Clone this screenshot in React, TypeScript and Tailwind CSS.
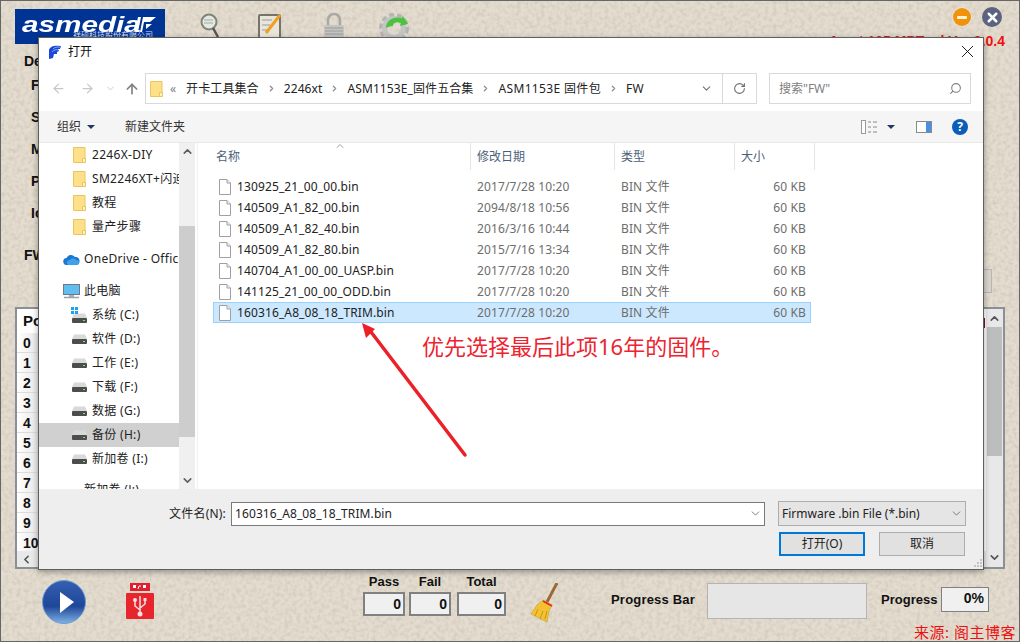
import { ArrowLeft, ArrowRight, ArrowUp, ChevronDown, ChevronLeft, ChevronRight, ChevronUp, RotateCw, Search, X } from "lucide-react";

const sans = "[font-family:'Noto_Sans','Noto_Sans_CJK_SC',sans-serif]";

const files = [
  { name: "130925_21_00_00.bin", date: "2017/7/28 10:20" },
  { name: "140509_A1_82_00.bin", date: "2094/8/18 10:56" },
  { name: "140509_A1_82_40.bin", date: "2016/3/16 10:44" },
  { name: "140509_A1_82_80.bin", date: "2015/7/16 13:34" },
  { name: "140704_A1_00_00_UASP.bin", date: "2017/7/28 10:20" },
  { name: "141125_21_00_00_ODD.bin", date: "2017/7/28 10:20" },
  { name: "160316_A8_08_18_TRIM.bin", date: "2017/7/28 10:20", selected: true },
];

const folders = ["2246X-DIY", "SM2246XT+闪迪", "教程", "量产步骤"];
const drives = ["软件 (D:)", "工作 (E:)", "下载 (F:)", "数据 (G:)", "备份 (H:)", "新加卷 (I:)"];
const crumbs = ["开卡工具集合", "2246xt", "ASM1153E_固件五合集", "ASM1153E 固件包", "FW"];

function FolderIcon({ className = "" }: { className?: string }) {
  return (
    <svg width="13" height="16" viewBox="0 0 13 16" className={`shrink-0 ${className}`}>
      <path d="M.5.5h11.500v15H.5z" fill="#ffe08a" stroke="#e9c65c" />
      <path d="M9.500 11.500h3v4h-3z" fill="#fff1c4" stroke="#e9c65c" />
    </svg>
  );
}

function DriveIcon() {
  return (
    <svg width="15" height="10" viewBox="0 0 15 10" className="shrink-0">
      <path d="M2 0.500h11l2 4.500H0z" fill="#d9d9d9" />
      <rect x="0" y="5" width="15" height="5" rx="1" fill="#4a4f4a" />
      <rect x="11" y="7" width="2" height="1" fill="#7fe07f" />
    </svg>
  );
}

function FileIcon() {
  return (
    <svg width="12" height="16" viewBox="0 0 12 16" className="shrink-0">
      <path d="M.5.5h7.500l3.500 3.500v11.500h-11z" fill="#fff" stroke="#a0a0a0" />
      <path d="M8 .5v3.500h3.500" fill="#f0f0f0" stroke="#a0a0a0" />
    </svg>
  );
}

function Toolbar() {
  return (
    <div className="flex items-start">
      <svg width="20" height="26" viewBox="0 0 20 26" className="ml-[35px] mt-[4px]">
        <circle cx="9" cy="9" r="7.500" fill="#e4e8e2" stroke="#7d8478" strokeWidth="2" />
        <path d="M4 7h9M4 10h9" stroke="#a5a9a0" />
        <path d="M13 15l5 9" stroke="#555" strokeWidth="2.500" />
      </svg>
      <svg width="26" height="26" viewBox="0 0 26 26" className="ml-[38px] mt-[4px]">
        <rect x="1" y="2" width="21" height="23" rx="1" fill="#e8e5dc" stroke="#77736a" strokeWidth="2" />
        <path d="M4 7h10M4 12h8M4 17h6" stroke="#999" />
        <path d="M8 20L22 2" stroke="#f0a020" strokeWidth="3" />
      </svg>
      <svg width="24" height="26" viewBox="0 0 24 26" className="ml-[38px] mt-[4px]">
        <path d="M6 12V7a6 6 0 0 1 12 0v5" fill="none" stroke="#a8a8a6" strokeWidth="2.500" />
        <rect x="2" y="12" width="20" height="14" rx="2" fill="#c4c4c2" />
        <path d="M3 15h18M3 18h18M3 21h18" stroke="#9b9b99" />
      </svg>
      <svg width="30" height="30" viewBox="0 0 30 30" className="ml-[33px] mt-[4px]">
        <circle cx="15" cy="15" r="13" fill="none" stroke="#b4b4b4" strokeWidth="4" strokeDasharray="5 3" />
        <circle cx="15" cy="15" r="9.500" fill="none" stroke="#c4c4c4" strokeWidth="5" />
        <path d="M7 15C7 7 15 3 23 5l1-2 5 8-8 2 1-3C17 8 14 10 14 13c-3 0-5 1-7 2z" fill="#4cc23e" />
      </svg>
    </div>
  );
}

function Logo() {
  return (
    <div className="relative h-[35px] w-[150px] overflow-hidden bg-[#003494]">
      <span className="absolute left-[7px] top-[1px] origin-left scale-x-[1.35] text-[22px] font-bold italic leading-[30px] text-white [font-family:'Liberation_Sans',sans-serif]">
        asmedia
      </span>
      <svg width="21" height="15" viewBox="0 0 21 15" className="absolute left-[120px] top-[8px]">
        <path d="M3 0h3L3 15H0zM8 0h13l-6 5H9L7 15H5z" fill="#fff" />
        <path d="M11 7h6l-6 5z" fill="#fff" />
      </svg>
      <span className={`absolute left-[58px] top-[20px] text-[8px] leading-[12px] text-[#d8def0] ${sans}`}>祥硕科技股份有限公司</span>
    </div>
  );
}

function Stat({ label, width }: { label: string; width: string }) {
  return (
    <div className="flex flex-col items-center">
      <span className="text-[13px] font-bold leading-[16px] text-[#111]">{label}</span>
      <span className={`${width} mt-[2px] h-[24px] border-2 border-[#808080] bg-[#f0f0f0] pr-[2px] text-right text-[14px] font-bold leading-[20px] text-[#111]`}>0</span>
    </div>
  );
}

function BackgroundApp() {
  const labels = [
    { text: "Device", cls: "mt-[2px] ml-[23px]" },
    { text: "F", cls: "mt-[8px] ml-[30px]" },
    { text: "S", cls: "mt-[16px] ml-[30px]" },
    { text: "M", cls: "mt-[16px] ml-[30px]" },
    { text: "P", cls: "mt-[16px] ml-[30px]" },
    { text: "Io", cls: "mt-[16px] ml-[30px]" },
    { text: "FW", cls: "mt-[26px] ml-[23px]" },
  ];
  return (
    <div className="flex h-full flex-col [font-family:'Liberation_Sans',sans-serif]">
      <div className="flex h-[50px] items-start pl-[14px] pt-[8px]">
        <Logo />
        <Toolbar />
        <span className="ml-auto mt-[-2px] flex items-center gap-[11px] pr-[17px]">
          <span className="flex h-[18px] w-[18px] items-center justify-center rounded-full bg-[#f0920c] ring-1 ring-[#e8e0d0]">
            <span className="h-[3px] w-[10px] rounded-[1px] bg-[#fff3d0]" />
          </span>
          <span className="flex h-[20px] w-[20px] items-center justify-center rounded-full bg-[#5b6380]">
            <X size={15} strokeWidth={4} className="text-white" />
          </span>
        </span>
      </div>
      <div className="relative h-0">
        <span className="absolute right-[14px] top-[-18px] text-[14px] font-bold leading-[16px] text-[#f01010]">Asmt 105 MPTool Ver 9.0.4</span>
      </div>
      {labels.map((l) => (
        <span key={l.text} className={`${l.cls} text-[14px] font-bold leading-[16px] text-[#111]`}>{l.text}</span>
      ))}
      <div className="mt-[6px] flex h-[24px] justify-end pr-[27px]">
        <span className="w-[60px] border border-[#b5b5b5] bg-[#d8d4cc]" />
      </div>
      <div className="mx-[14px] mt-[14px] flex h-[262px] border-2 border-[#8b8f98] bg-white">
        <div className="flex min-w-0 flex-1 flex-col">
          <div className="flex min-h-0 flex-1 flex-col overflow-hidden">
            <div className="flex h-[24px] shrink-0 items-center justify-between pl-[6px] pr-[1px]">
              <span className="text-[15px] font-bold text-[#111]">Port</span>
              <span className="mt-[3px] h-[10px] w-[3px] bg-[#8a1020]" />
            </div>
            {Array.from({ length: 11 }, (_, i) => (
              <div key={i} className="h-[20px] w-[24px] shrink-0 border-b border-[#dcdcdc] bg-gradient-to-r from-white to-[#e4e4e4] pl-[6px] text-[14px] font-bold leading-[20px] text-[#111]">
                {i}
              </div>
            ))}
          </div>
          <div className="flex h-[16px] shrink-0 items-center bg-[#e9e9e9]">
            <ChevronLeft size={13} strokeWidth={3} className="ml-[3px] text-[#555]" />
          </div>
        </div>
        <div className="flex w-[17px] flex-col items-center bg-[#e8e8e8]">
          <ChevronUp size={13} strokeWidth={3} className="mt-[3px] text-[#555]" />
          <span className="mt-[2px] h-[129px] w-[15px] bg-[#bcbebe]" />
          <ChevronDown size={13} strokeWidth={3} className="mt-auto mb-[3px] text-[#555]" />
        </div>
      </div>
      <div className="relative flex flex-1 items-start">
        <svg width="44" height="44" viewBox="0 0 44 44" className="ml-[41px] mt-[11px]">
          <defs>
            <linearGradient id="playBg" x1="0" y1="0" x2="0" y2="1">
              <stop offset="0" stopColor="#3560b0" />
              <stop offset="0.6" stopColor="#1f4699" />
              <stop offset="1" stopColor="#7fb4e4" />
            </linearGradient>
          </defs>
          <circle cx="22" cy="22" r="21.500" fill="url(#playBg)" stroke="#6a9ad0" />
          <path d="M18 12l14 10-14 11z" fill="#fff" />
        </svg>
        <svg width="28" height="36" viewBox="0 0 28 36" className="ml-[40px] mt-[14px]">
          <path d="M4 0h20v8H4z" fill="#e0202c" />
          <path d="M7 2h3v3H7zM17 2h3v3h-3z" fill="#fff" />
          <path d="M12 6l1-3h2" stroke="#fff" fill="none" />
          <rect y="10" width="28" height="26" rx="1" fill="#e8242c" />
          <path d="M14 13v18M9 17v6l5 4M19 17v4l-5 4" stroke="#f2e0e0" strokeWidth="1.500" fill="none" />
          <circle cx="14" cy="31" r="2.500" fill="#f2e0e0" />
          <rect x="17.500" y="15" width="3" height="3" fill="#f2e0e0" />
          <circle cx="9" cy="17" r="2" fill="#f2e0e0" />
        </svg>
        <div className="ml-[209px] mt-[5px] flex gap-[4px]">
          <Stat label="Pass" width="w-[42px]" />
          <Stat label="Fail" width="w-[42px]" />
          <span className="ml-[2px]">
            <Stat label="Total" width="w-[49px]" />
          </span>
        </div>
        <svg width="28" height="40" viewBox="0 0 28 40" className="ml-[24px] mt-[14px]">
          <path d="M27 0l-10 19" stroke="#9a6a38" strokeWidth="3" />
          <path d="M13 17l9 5-3 6-2 11-16-8 6-9z" fill="#f2c233" stroke="#c89418" strokeWidth="0.500" />
          <path d="M13 18l9 5" stroke="#e03020" strokeWidth="2" />
          <path d="M8 26l-3 7M13 28l-3 8M17 28l-2 8" stroke="#c89418" />
        </svg>
        <span className="ml-[53px] mt-[23px] text-[13px] font-bold leading-[16px] tracking-[0.2px] text-[#111]">Progress Bar</span>
        <span className="ml-[12px] mt-[14px] h-[36px] w-[160px] border border-[#b4b4b4] bg-[#e6e6e6]" />
        <span className="ml-[14px] mt-[23px] w-[56px] whitespace-nowrap text-[13px] font-bold leading-[16px] text-[#111]">Progress</span>
        <span className="ml-[4px] mt-[18px] h-[25px] w-[48px] border border-[#808080] bg-[#f0f0f0] pr-[4px] text-right text-[14px] font-bold leading-[20px] text-[#111]">0%</span>
        <span className={`absolute bottom-0 right-[3px] text-[15px] leading-[18px] tracking-[0.5px] text-[#ee1111] ${sans}`}>来源: 阁主博客</span>
      </div>
    </div>
  );
}

function Sidebar() {
  return (
    <div className="flex w-[156px] shrink-0">
      <div className="w-[140px] shrink-0 overflow-hidden text-[12px] tracking-[0.3px] text-[#222]">
        {folders.map((f) => (
          <div key={f} className="flex h-[24px] items-center whitespace-nowrap pl-[34px]">
            <FolderIcon />
            <span className="ml-[6px]">{f}</span>
          </div>
        ))}
        <div className="mt-[8px] flex h-[24px] items-center whitespace-nowrap pl-[24px]">
          <svg width="17" height="11" viewBox="0 0 17 11" className="shrink-0">
            <path d="M4 11a3.500 3.500 0 0 1-.5-7A5 5 0 0 1 12 3a4 4 0 0 1 1 8z" fill="#1a78d0" />
            <path d="M6 11a2.500 2.500 0 0 1 1-5 3.500 3.500 0 0 1 6 0 2.500 2.500 0 0 1 1 5z" fill="#3ea2ea" />
          </svg>
          <span className="ml-[4px]">OneDrive - Office</span>
        </div>
        <div className="mt-[8px] flex h-[24px] items-center pl-[24px]">
          <svg width="17" height="15" viewBox="0 0 17 15" className="shrink-0">
            <rect x=".5" y=".5" width="16" height="10" fill="#62bdf0" stroke="#6d7a86" />
            <path d="M6 11h5v2H6z" fill="#a8b0b8" />
            <path d="M1 13.500h15" stroke="#9aa2aa" strokeWidth="1.500" />
          </svg>
          <span className="ml-[4px]">此电脑</span>
        </div>
        <div className="flex h-[24px] items-center pl-[33px]">
          <span className="relative flex h-[16px] w-[15px] items-end">
            <DriveIcon />
            <svg width="7" height="7" viewBox="0 0 7 7" className="absolute left-[-1px] top-0">
              <path d="M0 0h3v3H0zM4 0h3v3H4zM0 4h3v3H0zM4 4h3v3H4z" fill="#1ea0f0" />
            </svg>
          </span>
          <span className="ml-[5px]">系统 (C:)</span>
        </div>
        {drives.map((d) => (
          <div key={d} className={`flex h-[24px] items-center pl-[33px] ${d.startsWith("备份") ? "bg-[#d0d0d0]" : ""}`}>
            <DriveIcon />
            <span className="ml-[5px]">{d}</span>
          </div>
        ))}
        <div className="mt-[10px] pl-[45px]">新加卷 (J:)</div>
      </div>
      <div className="flex w-[16px] shrink-0 flex-col items-center bg-[#f0f0f0]">
        <ChevronUp size={13} strokeWidth={3} className="mt-[2px] text-[#606060]" />
        <span className="mt-[68px] h-[211px] w-full bg-[#cdcdcd]" />
        <ChevronDown size={13} strokeWidth={3} className="mt-auto mb-[2px] text-[#606060]" />
      </div>
    </div>
  );
}

function FileList() {
  return (
    <div className="ml-[2px] min-w-0 flex-1 border-l border-[#f0f0f0] pl-[15px]">
      <div className="relative flex h-[27px] text-[12px] text-[#4c607a]">
        <ChevronUp size={12} strokeWidth={1.500} className="absolute left-[121px] top-[-3px] text-[#808080]" />
        <span className="w-[258px] border-r border-[#e5e5e5] pl-[3px] leading-[28px]">名称</span>
        <span className="w-[144px] border-r border-[#e5e5e5] pl-[6px] leading-[28px]">修改日期</span>
        <span className="w-[120px] border-r border-[#e5e5e5] pl-[6px] leading-[28px]">类型</span>
        <span className="w-[80px] border-r border-[#e5e5e5] pl-[6px] leading-[28px]">大小</span>
      </div>
      <div className="mt-[6px] w-[598px] text-[12px] tracking-[0.12px]">
        {files.map((f) => (
          <div key={f.name} className={`flex h-[21px] items-center border pl-[5px] pr-[4px] ${f.selected ? "border-[#99d1ff] bg-[#cce8ff]" : "border-transparent"}`}>
            <FileIcon />
            <span className="ml-[6px] w-[240px] text-[#222]">{f.name}</span>
            <span className="w-[144px] text-[#6d6d6d]">{f.date}</span>
            <span className="w-[120px] text-[#6d6d6d]">BIN 文件</span>
            <span className="w-[65px] text-right text-[#6d6d6d]">60 KB</span>
          </div>
        ))}
      </div>
    </div>
  );
}

function OpenDialog() {
  return (
    <div className={`absolute left-[37px] top-[36px] flex h-[533px] w-[946px] flex-col border border-[#5f5f5f] bg-white shadow-[0_2px_6px_rgba(0,0,0,0.35)] ${sans}`}>
      <div className="flex h-[27px] shrink-0 items-center pl-[9px] pr-[5px] text-[12px] text-[#111]">
        <svg width="14" height="14" viewBox="0 0 14 14">
          <path d="M1 14V5C2 1 7 0 13 1L12 4 10 4 11 6 9 7 9 9 6 9 5 13z" fill="#1c46d8" />
          <path d="M5 4C7 2 9 2 12 2M4 7C6 5 8 4 10 5" stroke="#7fa8f5" fill="none" />
        </svg>
        <span className="ml-[6px]">打开</span>
        <X size={21} strokeWidth={1} className="ml-auto text-black" />
      </div>
      <div className="mt-[8px] flex h-[31px] shrink-0 items-center">
        <ArrowLeft size={15} strokeWidth={2} className="ml-[12px] text-[#c8c8c8]" />
        <ArrowRight size={15} strokeWidth={2} className="ml-[14px] text-[#c8c8c8]" />
        <ChevronDown size={11} strokeWidth={2} className="ml-[10px] text-[#c8c8c8]" />
        <ArrowUp size={16} strokeWidth={2.500} className="ml-[8px] text-[#808080]" />
        <div className="ml-[5px] flex h-[31px] w-[612px] items-center border border-[#d9d9d9] pl-[4px] text-[12px] text-[#222]">
          <FolderIcon />
          <span className="ml-[7px] text-[#808080]">«</span>
          <span className="ml-[10px] tracking-[0.1px]">{crumbs[0]}</span>
          {crumbs.slice(1).map((c) => (
            <span key={c} className="flex items-center">
              <ChevronRight size={9} strokeWidth={3.500} className="mx-[8px] text-[#909090]" />
              <span className={c.endsWith("包") ? "tracking-[0.35px]" : "tracking-[0.1px]"}>{c}</span>
            </span>
          ))}
          <ChevronDown size={13} strokeWidth={2} className="ml-auto mr-[9px] text-[#707070]" />
          <span className="flex h-full w-[34px] items-center justify-center border-l border-[#d9d9d9]">
            <RotateCw size={13} strokeWidth={2} className="text-[#707070]" />
          </span>
        </div>
        <div className="ml-[12px] flex h-[31px] w-[202px] items-center justify-between border border-[#d9d9d9] pl-[9px] pr-[8px] text-[12px] text-[#808080]">
          <span>搜索"FW"</span>
          <Search size={13} strokeWidth={2} className="-scale-x-100 text-[#808080]" />
        </div>
      </div>
      <div className="mt-[7px] flex h-[32px] shrink-0 items-center border-b border-[#e8e8e8] bg-[#f5f5f5] text-[12px] text-[#333]">
        <span className="ml-[18px]">组织</span>
        <span className="ml-[6px] h-0 w-0 border-x-[4px] border-t-[4px] border-x-transparent border-t-[#1f3864]" />
        <span className="ml-[30px]">新建文件夹</span>
        <svg width="17" height="14" viewBox="0 0 17 14" className="ml-auto">
          <rect x=".5" y=".5" width="4" height="13" fill="#fff" stroke="#9a9a9a" />
          <path d="M7 2h3M12 2h4M7 7h3M12 7h4M7 12h3M12 12h4" stroke="#8a8a8a" />
        </svg>
        <span className="ml-[9px] h-0 w-0 border-x-[4px] border-t-[4px] border-x-transparent border-t-[#1f3864]" />
        <svg width="16" height="12" viewBox="0 0 16 12" className="ml-[21px]">
          <rect x=".5" y=".5" width="15" height="11" fill="#fff" stroke="#8a8a8a" />
          <rect x="10" y="1" width="5" height="10" fill="#4a90e2" />
        </svg>
        <span className="ml-[20px] mr-[15px] flex h-[16px] w-[16px] items-center justify-center rounded-full bg-[#0a5db8] text-[12px] font-bold leading-none text-white">?</span>
      </div>
      <div className="flex min-h-0 flex-1 overflow-hidden">
        <Sidebar />
        <FileList />
      </div>
      <div className="relative h-[80px] shrink-0 bg-[#eeeeee] pt-[12px] text-[12px] text-[#222]">
        <div className="flex h-[25px] items-center justify-end pr-[17px]">
          <span className="tracking-[0.2px]">文件名(N):</span>
          <div className="ml-[5px] flex h-[24px] w-[534px] items-center justify-between border border-[#7a7a7a] bg-white pl-[3px] pr-[2px]">
            <span className="tracking-[0.1px]">160316_A8_08_18_TRIM.bin</span>
            <ChevronDown size={13} strokeWidth={1.500} className="text-[#606060]" />
          </div>
          <div className="ml-[13px] flex h-[25px] w-[188px] items-center justify-between border border-[#adadad] bg-[#e5e5e5] pl-[3px] pr-[2px]">
            <span>Firmware .bin File (*.bin)</span>
            <ChevronDown size={13} strokeWidth={1.500} className="text-[#606060]" />
          </div>
        </div>
        <div className="mt-[6px] flex justify-end gap-[14px] pr-[18px]">
          <button className="h-[24px] w-[86px] border-2 border-[#0078d7] bg-[#e1e1e1] text-[12px]">打开(O)</button>
          <button className="h-[24px] w-[86px] border border-[#adadad] bg-[#e1e1e1] text-[12px]">取消</button>
        </div>
        <svg width="8" height="8" viewBox="0 0 8 8" className="absolute bottom-[2px] right-[1px]">
          <path d="M6 0h2v2H6zM3 3h2v2H3zM6 3h2v2H6zM0 6h2v2H0zM3 6h2v2H3zM6 6h2v2H6z" fill="#c4c4c4" />
        </svg>
      </div>
    </div>
  );
}

export default function App() {
  return (
    <div className="relative isolate h-[642px] w-[1020px] overflow-hidden border border-[#666] bg-[#e3dccf]">
      <svg className="pointer-events-none absolute inset-0 -z-10 h-full w-full">
        <filter id="paper">
          <feTurbulence type="fractalNoise" baseFrequency="0.25" numOctaves="3" seed="4" />
          <feColorMatrix values="0 0 0 0 0.45  0 0 0 0 0.4  0 0 0 0 0.32  0 0 0 0.7 -0.27" />
        </filter>
        <rect width="100%" height="100%" filter="url(#paper)" />
      </svg>
      <BackgroundApp />
      <OpenDialog />
      {/* red annotation on top of the dialog */}
      <svg width="120" height="150" viewBox="0 0 120 150" className="pointer-events-none absolute left-[355px] top-[315px]">
        <path d="M109 139L12 12" stroke="#ec2028" strokeWidth="3.500" strokeLinecap="round" />
        <path d="M6 7l13 6-9 9z" fill="#ec2028" />
      </svg>
      <span className={`absolute left-[421px] top-[329px] text-[22px] leading-[32px] text-[#ec2430] ${sans}`}>优先选择最后此项16年的固件。</span>
    </div>
  );
}
